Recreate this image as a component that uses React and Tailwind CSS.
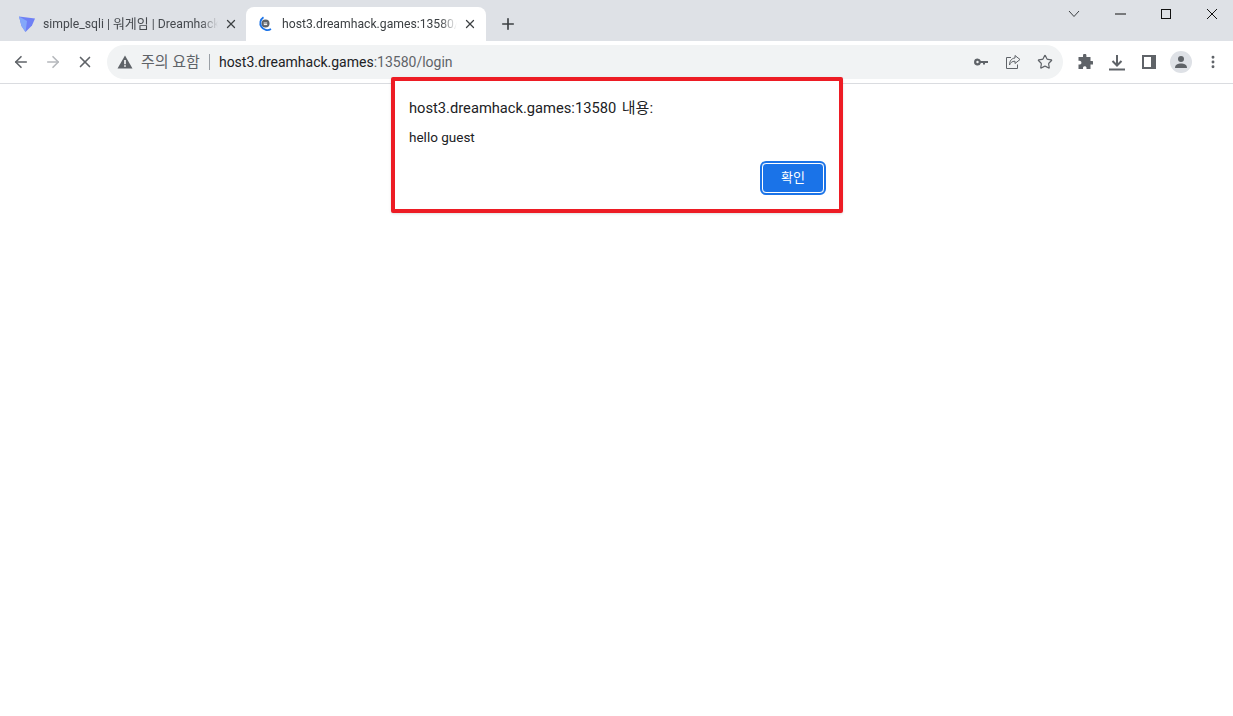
import React from 'react';
import { ArrowLeft, ArrowRight, X, Plus, Star, MoreVertical } from 'lucide-react';

const font = { fontFamily: 'Roboto, "Noto Sans CJK KR", sans-serif' };

function DreamhackIcon() {
    return (
        <svg width="18" height="18" viewBox="0 0 18 18">
            <path d="M1 1.5 L17 3.5 L14 10.5 L7.5 17 L3.5 11 Z" fill="#6f80f5" />
            <path d="M1 1.5 L9 6 L7.5 17 L3.5 11 Z" fill="#83a8fa" />
        </svg>
    );
}

function LoadingFavicon() {
    return (
        <svg width="16" height="16" viewBox="0 0 16 16">
            <circle cx="8.5" cy="7.5" r="4" fill="#5f6368" />
            <path d="M6.6 7 h3.6 M6.8 8.6 h3.4" stroke="#fff" strokeWidth="1" />
            <path d="M6.5 1.2 A6.8 6.8 0 0 0 14 13" fill="none" stroke="#1a73e8" strokeWidth="1.8" />
        </svg>
    );
}

function KeyIcon() {
    return (
        <svg width="16" height="16" viewBox="0 0 16 16" fill="#5f6368">
            <path d="M4.5 4.5 A3.5 3.5 0 1 0 7.9 9 H10 V10.5 H12 V9 H15 V7 H7.9 A3.5 3.5 0 0 0 4.5 4.5 Z M4.5 6.8 A1.2 1.2 0 1 1 4.5 9.2 A1.2 1.2 0 0 1 4.5 6.8 Z" fillRule="evenodd" />
        </svg>
    );
}

function ShareIcon() {
    return (
        <svg width="16" height="16" viewBox="0 0 16 16" fill="none" stroke="#5f6368" strokeWidth="1">
            <path d="M6 3.5 H1.5 V14.5 H12.5 V10.5" />
            <path d="M10 1.5 L15 5.5 L10 9.5 V7.2 C7 7.2 5.5 8.5 4.5 11 C4.5 7 6.5 4.3 10 4 Z" />
        </svg>
    );
}

function PuzzleIcon() {
    return (
        <svg width="16" height="16" viewBox="0 0 16 16" fill="#5f6368">
            <path d="M6 1.5 A1.7 1.7 0 0 1 9.4 1.5 V3 H13.5 V7 H15 A1.8 1.8 0 0 1 15 10.6 H13.5 V15 H9.5 V13.6 A1.8 1.8 0 0 0 6 13.6 V15 H1.5 V10.5 H3 A1.9 1.9 0 0 0 3 6.8 H1.5 V3 H6 Z" />
        </svg>
    );
}

function DownloadIcon() {
    return (
        <svg width="16" height="17" viewBox="0 0 16 17" fill="none" stroke="#5f6368" strokeWidth="2">
            <path d="M8 1 V11 M3.5 7 L8 11.5 L12.5 7" />
            <path d="M0 15.5 H16" />
        </svg>
    );
}

function SidePanelIcon() {
    return (
        <svg width="14" height="14" viewBox="0 0 14 14">
            <path d="M0 0 H14 V14 H0 Z M2 2 V12 H9 V2 Z" fill="#5f6368" fillRule="evenodd" />
        </svg>
    );
}

function WarningIcon() {
    return (
        <svg width="16" height="14" viewBox="0 0 16 14">
            <path d="M8 0.5 L15.5 13.5 H0.5 Z" fill="#5f6368" />
            <path d="M7.2 5 H8.8 V9.2 H7.2 Z M7.2 10.2 H8.8 V11.8 H7.2 Z" fill="#fff" />
        </svg>
    );
}

function ProfileIcon() {
    return (
        <div className="w-[22px] h-[22px] rounded-full bg-[#dee1e6] flex items-center justify-center">
            <svg width="14" height="14" viewBox="0 0 14 14" fill="#5f6368">
                <circle cx="7" cy="4" r="3" />
                <path d="M1 13 C1 9.5 4 8.5 7 8.5 C10 8.5 13 9.5 13 13 Z" />
            </svg>
        </div>
    );
}

function WindowControls() {
    return (
        <div className="ml-auto -mr-[2px] flex h-[28px] items-center self-start">
            <div className="w-[46px] flex justify-center">
                <svg width="12" height="8" viewBox="0 0 12 8" fill="none" stroke="#3c4043"><path d="M1 1 L6 6.5 L11 1" /></svg>
            </div>
            <div className="w-[46px] flex justify-center">
                <svg width="11" height="2" viewBox="0 0 11 2"><path d="M0 1 H11" stroke="#111" /></svg>
            </div>
            <div className="w-[46px] flex justify-center">
                <div className="w-[10px] h-[10px] border border-[#111]"></div>
            </div>
            <div className="w-[46px] flex justify-center">
                <svg width="12" height="12" viewBox="0 0 12 12" stroke="#111"><path d="M1 1 L11 11 M11 1 L1 11" /></svg>
            </div>
        </div>
    );
}

function App() {
    return (
        <div className="relative min-h-screen bg-white overflow-hidden" style={font}>
            <div className="h-[41px] bg-[#dee1e6] flex items-end pl-[8px]">
                <div className="w-[238px] h-[34px] flex items-center pl-[10px] pr-[8px] text-[12.2px] text-[#45494e]">
                    <DreamhackIcon />
                    <span className="ml-[7px] w-[175px] overflow-hidden whitespace-nowrap [mask-image:linear-gradient(to_right,black_90%,transparent)]">simple_sqli | <span className="text-[13px]">워게임</span> | Dreamhack</span>
                    <X size={14} strokeWidth={2.2} className="ml-auto text-[#3c4043]" />
                </div>
                <div className="w-[240px] h-[34px] bg-white rounded-t-[8px] flex items-center pl-[11px] pr-[9px] text-[12.2px] text-[#3c4043]">
                    <LoadingFavicon />
                    <span className="ml-[9px] w-[175px] overflow-hidden whitespace-nowrap [mask-image:linear-gradient(to_right,black_90%,transparent)]">host3.dreamhack.games:13580/login</span>
                    <X size={14} strokeWidth={2.2} className="ml-auto text-[#3c4043]" />
                </div>
                <Plus size={18} strokeWidth={2.2} className="ml-[13px] mb-[8px] text-[#3c4043]" />
                <WindowControls />
            </div>

            <div className="h-[43px] border-b border-[#dadce0] flex items-center pl-[12px] pr-[11px]">
                <ArrowLeft size={18} strokeWidth={2.2} className="text-[#5f6368]" />
                <ArrowRight size={18} strokeWidth={2.2} className="ml-[14px] text-[#b5b8bc]" />
                <X size={18} strokeWidth={2.2} className="ml-[14px] text-[#5f6368]" />
                <div className="ml-[13px] w-[956px] h-[34px] rounded-full bg-[#f1f3f4] flex items-center pl-[10px] pr-[10px] text-[14px]">
                    <WarningIcon />
                    <span className="ml-[8px] text-[15px] text-[#5f6368]">주의 요함</span>
                    <div className="ml-[9px] mr-[9px] w-px h-[16px] bg-[#9aa0a6]"></div>
                    <span className="text-[#202124]">host3.dreamhack.games</span>
                    <span className="text-[#5f6368]">:13580/login</span>
                    <div className="ml-auto flex items-center gap-[16px]">
                        <KeyIcon />
                        <ShareIcon />
                        <Star size={16} strokeWidth={1.8} className="text-[#5f6368]" />
                    </div>
                </div>
                <div className="ml-[14px] flex items-center">
                    <PuzzleIcon />
                    <div className="ml-[16px]"><DownloadIcon /></div>
                    <div className="ml-[17px]"><SidePanelIcon /></div>
                    <div className="ml-[14px]"><ProfileIcon /></div>
                    <MoreVertical size={16} strokeWidth={2.4} className="ml-[13px] text-[#5f6368]" />
                </div>
            </div>

            <div className="absolute left-[391px] top-[77px] w-[452px] h-[136px] border-4 border-[#ed1c24] rounded-[2px] bg-white shadow-sm pl-[14px] pr-[14px] pt-[17px] flex flex-col">
                <div className="text-[14.7px] leading-[20px] text-[#202124]">host3.dreamhack.games:13580 <span className="ml-[2px] text-[15px]">내용:</span></div>
                <div className="mt-[10px] text-[13.5px] leading-[18px] text-[#202124]">hello guest</div>
                <div className="mt-auto mb-[16px] flex justify-end">
                    <button className="w-[62px] h-[30px] mr-[1px] bg-[#1a73e8] rounded-[4px] border border-white outline-2 outline-[#1a73e8] text-[13px] text-white">확인</button>
                </div>
            </div>
        </div>
    );
}

export default App;
